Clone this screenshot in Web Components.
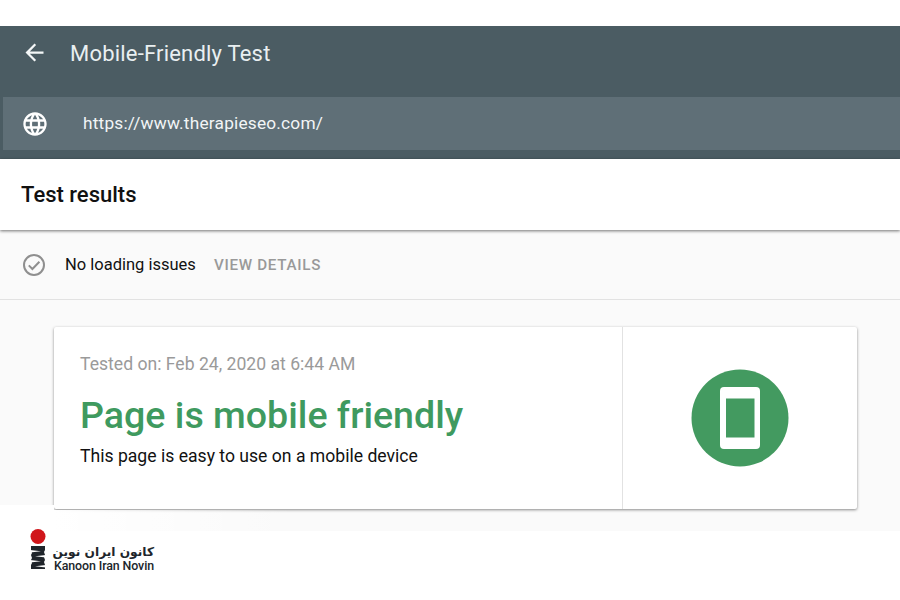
<!DOCTYPE html>
<html>
<head>
<meta charset="utf-8">
<title>Mobile-Friendly Test</title>
<style>
  html, body { margin: 0; height: 100%; background: #fff; overflow: hidden; }
  body { font-family: Roboto, "Liberation Sans", sans-serif; }
</style>
</head>
<body>
<mft-page>
  <mft-header title-text="Mobile-Friendly Test" url="https://www.therapieseo.com/"></mft-header>
  <mft-results-bar>Test results</mft-results-bar>
  <mft-status-row action="VIEW DETAILS">No loading issues</mft-status-row>
  <mft-result-card tested="Tested on: Feb 24, 2020 at 6:44 AM" heading="Page is mobile friendly">This page is easy to use on a mobile device</mft-result-card>
  <mft-brand></mft-brand>
</mft-page>

<script>
class MftPage extends HTMLElement {
  constructor() {
    super();
    this.attachShadow({ mode: 'open' });
    this.shadowRoot.innerHTML = `
      <style>
        :host {
          display: flex;
          flex-direction: column;
          width: 900px;
          height: 600px;
          border-top: 26px solid #fff;
          box-sizing: border-box;
          background: #fafafa;
          overflow: hidden;
        }
      </style>
      <slot></slot>
    `;
  }
}

class MftHeader extends HTMLElement {
  constructor() {
    super();
    this.attachShadow({ mode: 'open' });
  }

  connectedCallback() {
    this.shadowRoot.innerHTML = `
      <style>
        :host {
          display: block;
          height: 133px;
          background: #4b5c63;
          color: #fff;
        }
        .top {
          display: flex;
          align-items: center;
          height: 71px;
          padding: 0 0 16px 21px;
          box-sizing: border-box;
          gap: 22px;
        }
        .top svg { width: 27px; height: 27px; fill: #f4f7f8; flex: none; margin-top: -2px; }
        .title {
          font-size: 22px;
          letter-spacing: 0.2px;
          color: #e9eff1;
        }
        .url {
          display: flex;
          align-items: center;
          height: 53px;
          margin-left: 3px;
          background: #5f6f77;
          padding-left: 18px;
          gap: 34px;
        }
        .url svg { width: 28px; height: 28px; fill: #fff; flex: none; }
        .url span { font-size: 17.3px; letter-spacing: 0.2px; color: #f2f5f6; margin-top: -1px; }
      </style>
      <div class="top">
        <svg viewBox="0 0 24 24"><path d="M20 11H7.83l5.59-5.59L12 4l-8 8 8 8 1.41-1.41L7.83 13H20v-2z"/></svg>
        <div class="title">${this.getAttribute('title-text')}</div>
      </div>
      <div class="url">
        <svg viewBox="0 0 24 24"><path d="M12 2C6.48 2 2 6.48 2 12s4.48 10 10 10 10-4.48 10-10S17.52 2 12 2zm6.93 6h-2.95c-.32-1.25-.78-2.45-1.38-3.56 1.84.63 3.37 1.91 4.33 3.56zM12 4.04c.83 1.2 1.48 2.53 1.91 3.96h-3.82c.43-1.43 1.08-2.76 1.91-3.96zM4.26 14C4.1 13.36 4 12.69 4 12s.1-1.36.26-2h3.38c-.08.66-.14 1.32-.14 2s.06 1.34.14 2H4.26zm.82 2h2.95c.32 1.25.78 2.45 1.38 3.56-1.84-.63-3.37-1.9-4.33-3.56zm2.95-8H5.08c.96-1.66 2.49-2.93 4.33-3.56C8.81 5.55 8.35 6.75 8.03 8zM12 19.96c-.83-1.2-1.48-2.53-1.91-3.96h3.82c-.43 1.43-1.08 2.76-1.91 3.96zM14.34 14H9.66c-.09-.66-.16-1.32-.16-2s.07-1.35.16-2h4.68c.09.65.16 1.32.16 2s-.07 1.34-.16 2zm.25 5.56c.6-1.11 1.06-2.31 1.38-3.56h2.95c-.96 1.65-2.49 2.93-4.33 3.56zM16.36 14c.08-.66.14-1.32.14-2s-.06-1.34-.14-2h3.38c.16.64.26 1.31.26 2s-.1 1.36-.26 2h-3.38z"/></svg>
        <span>${this.getAttribute('url')}</span>
      </div>
    `;
  }
}

class MftResultsBar extends HTMLElement {
  constructor() {
    super();
    this.attachShadow({ mode: 'open' });
    this.shadowRoot.innerHTML = `
      <style>
        :host {
          display: flex;
          align-items: center;
          height: 71px;
          padding-left: 21px;
          background: #fff;
          color: #111;
          font-size: 22px;
          font-weight: 500;
          box-shadow: 0 1px 3px rgba(0, 0, 0, 0.55);
          position: relative;
        }
      </style>
      <slot></slot>
    `;
  }
}

class MftStatusRow extends HTMLElement {
  constructor() {
    super();
    this.attachShadow({ mode: 'open' });
  }

  connectedCallback() {
    this.shadowRoot.innerHTML = `
      <style>
        :host {
          display: flex;
          align-items: center;
          height: 70px;
          box-sizing: border-box;
          border-bottom: 1px solid #e2e2e2;
          padding-left: 22px;
          color: #111;
          font-size: 16.5px;
        }
        svg { width: 24px; height: 24px; flex: none; margin-right: 19px; }
        .action {
          margin-left: 18px;
          color: #999;
          font-size: 15.2px;
          font-weight: 500;
          letter-spacing: 0.7px;
        }
      </style>
      <svg viewBox="0 0 24 24" fill="none" stroke="#8f8f8f" stroke-width="2">
        <circle cx="12" cy="12" r="10"/>
        <path d="M6.8 12.4l3.6 3.6 7-7.2"/>
      </svg>
      <slot></slot>
      <span class="action">${this.getAttribute('action')}</span>
    `;
  }
}

class MftResultCard extends HTMLElement {
  constructor() {
    super();
    this.attachShadow({ mode: 'open' });
  }

  connectedCallback() {
    this.shadowRoot.innerHTML = `
      <style>
        :host {
          display: flex;
          width: 803px;
          height: 182px;
          margin: 27px 0 0 54px;
          flex: none;
          background: #fff;
          border-radius: 2px;
          box-shadow: 0 1px 3px rgba(0, 0, 0, 0.45);
        }
        .main {
          width: 569px;
          box-sizing: border-box;
          padding: 27px 0 0 26px;
          border-right: 1px solid #e2e2e2;
        }
        .tested { font-size: 17.6px; line-height: 20px; color: #9a9a9a; }
        h1 {
          margin: 20px 0 0;
          font-size: 37.6px;
          line-height: 42px;
          font-weight: 500;
          color: #3f9a5f;
        }
        .desc { margin-top: 10px; font-size: 17.6px; line-height: 20px; color: #111; }
        .side {
          flex: 1;
          display: flex;
          align-items: center;
          justify-content: center;
        }
        svg { width: 98px; height: 98px; }
      </style>
      <div class="main">
        <div class="tested">${this.getAttribute('tested')}</div>
        <h1>${this.getAttribute('heading')}</h1>
        <div class="desc"><slot></slot></div>
      </div>
      <div class="side">
        <svg viewBox="0 0 98 98">
          <circle cx="49" cy="49" r="48.5" fill="#439a60"/>
          <rect x="29" y="18" width="40" height="62" rx="4" fill="#fff"/>
          <rect x="35" y="29.5" width="28.5" height="39" fill="#439a60"/>
        </svg>
      </div>
    `;
  }
}

class MftBrand extends HTMLElement {
  constructor() {
    super();
    this.attachShadow({ mode: 'open' });
    this.shadowRoot.innerHTML = `
      <style>
        :host {
          display: flex;
          align-items: flex-start;
          flex: 1;
          margin-top: 22px;
          padding-left: 30px;
          gap: 8px;
          background: #fff;
          position: relative;
        }
        /* white wash over the page, fades out to the right */
        .wash-left {
          position: absolute;
          left: 0;
          top: -26px;
          width: 54px;
          height: 26px;
          background: #fff;
        }
        .wash-fade {
          position: absolute;
          left: 54px;
          top: -21px;
          width: 240px;
          height: 21px;
          background: linear-gradient(to right, #fff, rgba(250, 250, 250, 0));
        }
        svg { width: 16px; height: 41px; flex: none; margin-top: -2px; position: relative; }
        .words { display: flex; flex-direction: column; width: 100px; margin-top: 14px; color: #20252b; }
        .fa {
          font-family: "DejaVu Sans", sans-serif;
          font-size: 12.2px;
          line-height: 14px;
          font-weight: 700;
          white-space: nowrap;
        }
        .en { font-size: 12.4px; line-height: 13px; font-weight: 500; letter-spacing: -0.1px; white-space: nowrap; }
      </style>
      <div class="wash-left"></div>
      <div class="wash-fade"></div>
      <svg viewBox="0 0 16 41">
        <circle cx="8" cy="7.5" r="7.5" fill="#d0161b"/>
        <path d="M1 17h14v4l-1 2 1 3-1 2 1 3-1 2 1 3v4H1v-4l1-2-1-3 1-2-1-3 1-2-1-3z" fill="#20252b"/>
        <path d="M0 21l11 1.2L0 23.4zM16 26l-11 1.2 11 1.2zM0 31l11 1.2L0 33.4zM16 36l-11 1.2 11 1.2z" fill="#fff"/>
      </svg>
      <div class="words">
        <span class="fa" lang="fa" dir="rtl">کانون ایران نوین</span>
        <span class="en">Kanoon Iran Novin</span>
      </div>
    `;
  }
}

customElements.define('mft-page', MftPage);
customElements.define('mft-header', MftHeader);
customElements.define('mft-results-bar', MftResultsBar);
customElements.define('mft-status-row', MftStatusRow);
customElements.define('mft-result-card', MftResultCard);
customElements.define('mft-brand', MftBrand);
</script>
</body>
</html>
